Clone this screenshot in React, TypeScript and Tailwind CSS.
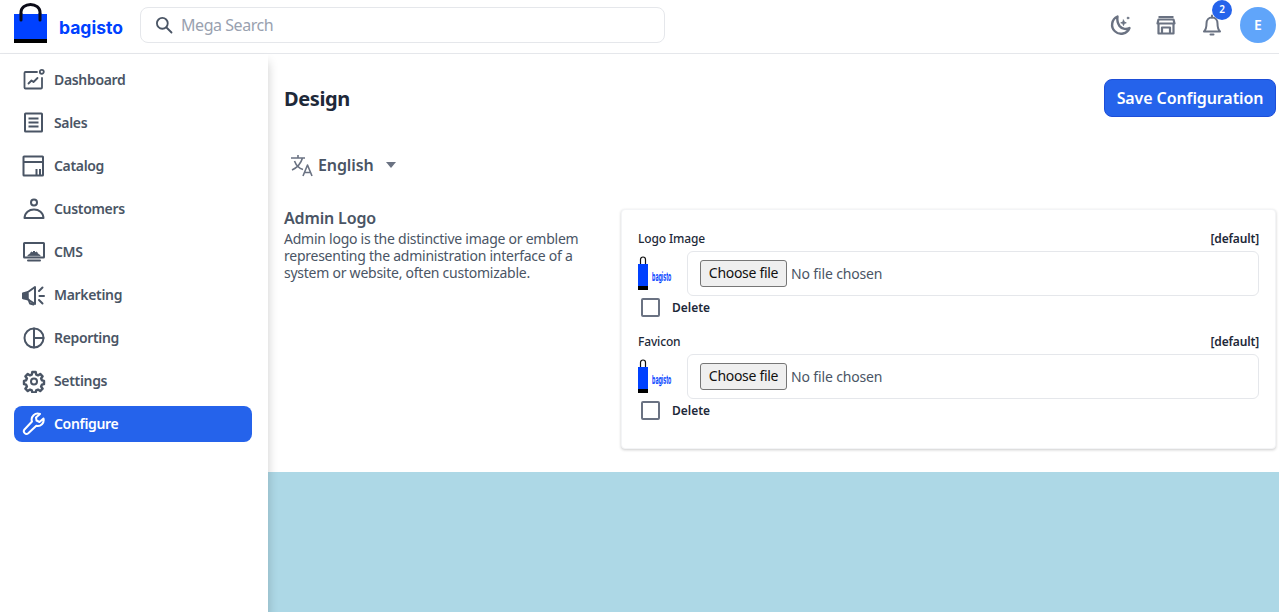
import type { ReactNode } from 'react';

const stroke = {
  fill: 'none',
  stroke: 'currentColor',
  strokeWidth: 1.8,
  strokeLinecap: 'round' as const,
  strokeLinejoin: 'round' as const,
};

function Ico({ children, className = 'w-6 h-6' }: { children: ReactNode; className?: string }) {
  return (
    <svg viewBox="0 0 24 24" className={`${className} shrink-0`} {...stroke}>
      {children}
    </svg>
  );
}

const navItems: { label: string; icon: ReactNode }[] = [
  {
    label: 'Dashboard',
    icon: (
      <Ico>
        <path d="M15 4H3.500a1 1 0 0 0-1 1v14.500a1 1 0 0 0 1 1h15.500a1 1 0 0 0 1-1V10" />
        <circle cx="19.800" cy="3.800" r="2" />
        <path d="M6.500 15.500l3-3 2 1.500 4-4" />
      </Ico>
    ),
  },
  {
    label: 'Sales',
    icon: (
      <Ico>
        <rect x="3" y="2.500" width="17" height="18" rx="0.600" strokeWidth="2" />
        <path d="M6.500 7.500h10M6.500 11.500h10M6.500 15.500h10" strokeWidth="2" strokeLinecap="butt" />
      </Ico>
    ),
  },
  {
    label: 'Catalog',
    icon: (
      <Ico>
        <rect x="1.500" y="2.500" width="19.500" height="19" rx="0.500" strokeWidth="2" />
        <path d="M1.500 8h19.500" strokeWidth="2" strokeLinecap="butt" />
        <path d="M14.500 15v6M18 15v6" strokeWidth="2" strokeLinecap="butt" />
      </Ico>
    ),
  },
  {
    label: 'Customers',
    icon: (
      <Ico>
        <circle cx="12" cy="5.500" r="3" strokeWidth="2" />
        <path d="M2.500 21c.3-5.500 4.500-8.500 9.500-8.500s9.200 3 9.500 8.500z" strokeWidth="2" />
      </Ico>
    ),
  },
  {
    label: 'CMS',
    icon: (
      <Ico>
        <rect x="2" y="3" width="20" height="14.500" rx="0.500" strokeWidth="2" />
        <path d="M6 20.500h12" strokeWidth="2" />
        <path d="M6 15.500l2.500-2 .8-1.500 1.200.5 1.500-1.500 1.500 1.500 1.200-.5.800 1.500 2.500 2z" fill="currentColor" strokeWidth="1" />
      </Ico>
    ),
  },
  {
    label: 'Marketing',
    icon: (
      <Ico>
        <path d="M1 10.500l5-1.500 7-5v17l-7-4.500-5-1.500z" fill="none" strokeWidth="2" />
        <path d="M1 10.500h5v5H1z" fill="currentColor" strokeWidth="1.500" />
        <path d="M6.500 16.500l1.500 4 3.500 1" strokeWidth="2" />
        <path d="M17 8l3.500-3.500M17.500 13H22M17 17l3.500 3.500" strokeWidth="2" />
      </Ico>
    ),
  },
  {
    label: 'Reporting',
    icon: (
      <Ico>
        <circle cx="12" cy="12" r="9.500" strokeWidth="2" />
        <path d="M12 2.500V21.500M12 12H21.500" strokeWidth="2" />
      </Ico>
    ),
  },
  {
    label: 'Settings',
    icon: (
      <Ico>
        <path
          strokeWidth="2.400"
          d="M10.300 3h3.400l.5 2.600 1.800.8 2.200-1.500 2.400 2.400-1.500 2.200.8 1.800 2.100.5v3.400l-2.100.5-.8 1.800 1.500 2.200-2.400 2.400-2.200-1.500-1.800.8-.5 2.100h-3.400l-.5-2.100-1.800-.8-2.200 1.500-2.400-2.400 1.500-2.200-.8-1.800-2.100-.5v-3.400l2.100-.5.8-1.800-1.500-2.200 2.400-2.400 2.200 1.500 1.800-.8z"
        />
        <circle cx="12" cy="12.400" r="3" strokeWidth="2" />
      </Ico>
    ),
  },
  {
    label: 'Configure',
    icon: (
      <Ico>
        <path
          strokeWidth="2"
          d="M21.500 6.500l-4 3.500-3-1.500-.5-3L18 2a6 6 0 0 0-8 7.500L2.500 17.500a2.700 2.700 0 0 0 3.800 3.800l8-7.500a6 6 0 0 0 7.200-7.300z"
        />
      </Ico>
    ),
  },
];

function SmallLogo() {
  return (
    <svg viewBox="0 0 34 36" className="w-[34px] h-[36px] shrink-0">
      <path d="M2.500 9V3.500a2.500 2.500 0 0 1 5 0V9" fill="none" stroke="#111" strokeWidth="1.200" />
      <rect x="0" y="8" width="10" height="25" fill="#0041ff" />
      <rect x="0" y="30" width="10" height="4" fill="#000" />
      <text transform="translate(14 25) scale(0.44 1)" fontSize="12" fontWeight="700" fill="#0041ff" fontFamily="Inter, sans-serif">
        bagisto
      </text>
    </svg>
  );
}

function ImageField({ label }: { label: string }) {
  return (
    <div className="mb-[17px]">
      <div className="flex justify-between items-center h-4 text-xs font-medium tracking-[-0.15px] text-gray-800">
        <span>{label}</span>
        <span className="font-semibold">[default]</span>
      </div>
      <div className="flex items-center gap-[15px] mt-1">
        <SmallLogo />
        <div className="flex-1 h-[45px] flex items-center px-3 border border-gray-200 rounded-md">
          <button className="h-[27px] w-[87px] pb-px border border-[#767676] rounded-[3px] bg-[#efefef] text-sm tracking-[-0.3px] text-[#111]">Choose file</button>
          <span className="ml-1 text-sm tracking-[-0.15px] text-gray-600">No file chosen</span>
        </div>
      </div>
      <div className="flex items-center h-[19px] mt-[2px]">
        <span className="w-[19px] h-[19px] ml-[3px] border-2 border-gray-500 rounded-[2px] bg-white" />
        <span className="ml-3 pt-px text-xs font-semibold text-gray-800">Delete</span>
      </div>
    </div>
  );
}

export default function App() {
  return (
    <div className="h-[612px] w-full flex flex-col overflow-hidden bg-white font-['Noto_Sans',sans-serif]">
      <header className="h-[54px] shrink-0 flex items-center justify-between pl-[14px] pr-[3px] pb-1 border-b border-gray-200 bg-white">
        <div className="flex items-center">
          <div className="flex items-center w-[126px]">
            <svg viewBox="0 0 33 40" className="w-[33px] h-[40px] shrink-0 -mt-1">
              <path d="M7 16V9a9.500 7.500 0 0 1 19 0v7" fill="none" stroke="#0b0b18" strokeWidth="3" strokeLinecap="round" />
              <rect x="0" y="11" width="33" height="26" fill="#0041ff" />
              <path d="M7 11v6M26 11v6" stroke="#0b0b18" strokeWidth="3" strokeLinecap="round" />
              <rect x="0" y="36" width="33" height="4" fill="#000" />
            </svg>
            <span className="ml-3 mt-[7px] text-[17.500px] leading-none font-bold text-[#0041ff] font-['Inter',sans-serif]">bagisto</span>
          </div>
          <div className="w-[525px] h-9 flex items-center pl-[13px] border border-gray-200 rounded-lg">
            <svg viewBox="0 0 24 24" className="w-5 h-5 text-gray-600" {...stroke} strokeWidth={2.200}>
              <circle cx="10" cy="10" r="6.500" />
              <path d="M15 15l6 6" />
            </svg>
            <span className="ml-[7px] text-base tracking-[-0.45px] text-gray-400">Mega Search</span>
          </div>
        </div>
        <div className="flex items-center">
          <svg viewBox="0 0 24 24" className="w-6 h-6 text-gray-500" {...stroke} strokeWidth={2.400}>
            <path d="M9.500 3.500a9 9 0 1 0 12 11.500c-2.500 1.500-7.500 1.500-10-2C9.500 10 9 6.500 9.500 3.500z" />
            <path d="M15.500 7l.8 2 2 .8-2 .8-.8 2-.8-2-2-.8 2-.8z" fill="currentColor" strokeWidth="0.800" />
            <circle cx="20" cy="5" r="1" fill="currentColor" strokeWidth="0.600" />
          </svg>
          <svg viewBox="0 0 24 24" className="w-6 h-6 ml-[22px] text-gray-500" {...stroke} strokeWidth={2.200} strokeLinecap="butt">
            <path d="M4.500 4h15M3.500 10.500l1-4h15l1 4zM4.500 11v9.500h15V11M8 20.500v-6h8v6" />
          </svg>
          <div className="relative ml-[22px]">
            <svg viewBox="0 0 24 24" className="w-6 h-6 text-gray-500" {...stroke}>
              <path d="M4 18.500h16c-2-2-2.500-3.500-2.500-8 0-3.500-2.200-6-5.500-6s-5.500 2.500-5.500 6c0 4.500-.5 6-2.500 8z" strokeWidth="2" />
              <path d="M12 2.500v2M10.500 21.500h3" strokeWidth="2" />
            </svg>
            <span className="absolute -top-[13px] left-[12px] w-5 h-5 rounded-full bg-[#2563eb] text-white text-[10px] font-semibold flex items-center justify-center">2</span>
          </div>
          <div className="ml-4 w-9 h-9 rounded-full bg-[#60a5fa] text-white text-sm font-semibold flex items-center justify-center">E</div>
        </div>
      </header>

      <div className="flex-1 flex min-h-0">
        <aside className="relative z-10 w-[268px] shrink-0 bg-white shadow-[0_8px_10px_0_rgba(0,0,0,0.2)] pt-2 pl-[14px] pr-4 flex flex-col gap-[7px]">
          {navItems.map((item) => {
            const active = item.label === 'Configure';
            return (
              <div key={item.label} className={`h-9 flex items-center gap-2 px-2 rounded-lg text-sm font-semibold tracking-[-0.33px] ${active ? 'bg-[#2563eb] text-white' : 'text-gray-600'}`}>
                {item.icon}
                <span>{item.label}</span>
              </div>
            );
          })}
        </aside>

        <div className="flex-1 min-w-0 flex flex-col bg-[#add8e6]">
          <main className="h-[418px] shrink-0 bg-white pl-4 pr-[3px]">
            <div className="flex items-center justify-between mt-[25px] h-[38px]">
              <h1 className="mt-[2px] text-xl font-bold tracking-[-0.4px] text-gray-800">Design</h1>
              <button className="h-[38px] w-[172px] rounded-lg bg-[#2563eb] border border-[#1d4ed8] text-white text-base font-semibold tracking-[-0.1px]">Save Configuration</button>
            </div>
            <div className="flex items-center mt-[36px] h-[24px] pl-[6px] text-gray-600">
              <svg viewBox="0 0 24 24" className="w-6 h-6 text-gray-500" {...stroke} strokeWidth={1.600} strokeLinecap="butt">
                <path d="M1 5h14M8 2v3M12.500 5c-1.500 5-5 9.500-10.500 12M4.500 8c1.500 4 5 7.500 8.500 8.500" />
                <path d="M13 23l4.500-11 4.500 11M14.500 19.500h6" />
              </svg>
              <span className="ml-[4px] text-base font-semibold tracking-[-0.1px]">English</span>
              <span className="ml-3 w-0 h-0 border-x-[5px] border-x-transparent border-t-[6px] border-t-gray-500" />
            </div>
            <div className="flex gap-9 mt-[32px]">
              <div className="w-[301px] shrink-0">
                <p className="text-base leading-[18px] font-semibold tracking-[-0.15px] text-gray-600">Admin Logo</p>
                <p className="mt-[3px] text-sm leading-[17px] tracking-[-0.25px] text-gray-600">
                  Admin logo is the distinctive image or emblem representing the administration interface of a system or website, often customizable.
                </p>
              </div>
              <div className="flex-1 h-[240px] px-4 pt-[21px] rounded border border-gray-100 bg-white shadow-[0_1px_3px_0_rgba(0,0,0,0.2)]">
                <ImageField label="Logo Image" />
                <ImageField label="Favicon" />
              </div>
            </div>
          </main>
        </div>
      </div>
    </div>
  );
}
